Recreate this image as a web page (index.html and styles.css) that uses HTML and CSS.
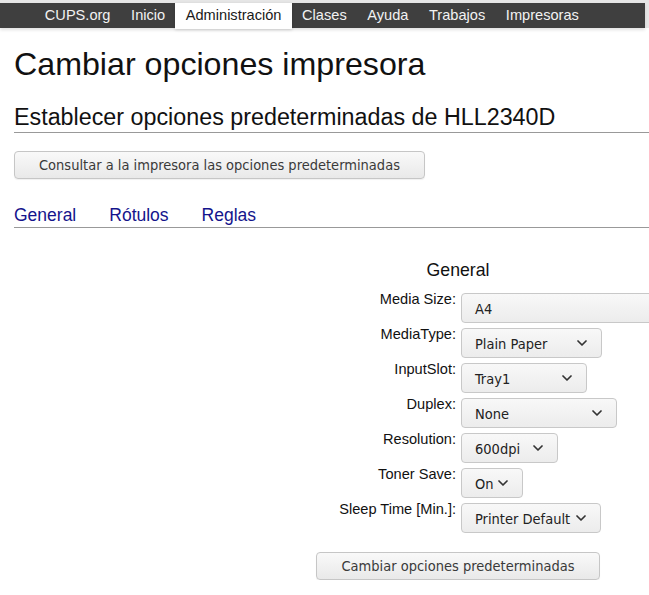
FILE: index.html
```html
<!DOCTYPE html>
<html lang="es">
<head>
<meta charset="utf-8">
<title>Cambiar opciones impresora</title>
<link rel="stylesheet" href="styles.css">
</head>
<body>
<nav class="topbar">
  <ul class="menu">
    <li><a href="#">CUPS.org</a></li>
    <li><a href="#">Inicio</a></li>
    <li class="active"><a href="#">Administración</a></li>
    <li><a href="#">Clases</a></li>
    <li><a href="#">Ayuda</a></li>
    <li><a href="#">Trabajos</a></li>
    <li><a href="#">Impresoras</a></li>
  </ul>
</nav>
<main class="page">
  <h1 class="title">Cambiar opciones impresora</h1>
  <h2 class="subtitle">Establecer opciones predeterminadas de HLL2340D</h2>
  <button class="btn">Consultar a la impresora las opciones predeterminadas</button>
  <div class="tabs">
    <a href="#">General</a>
    <a href="#">Rótulos</a>
    <a href="#">Reglas</a>
  </div>
  <section class="group">
    <h3 class="group-title">General</h3>
    <div class="opts">
      <label class="opt-label">Media Size:</label>
      <span class="sel sel-media"><span class="sel-text">A4</span></span>

      <label class="opt-label">MediaType:</label>
      <span class="sel sel-type"><span class="sel-text">Plain Paper</span><svg class="chev" viewBox="0 0 10 6"><path d="M1 1l4 4 4-4"/></svg></span>

      <label class="opt-label">InputSlot:</label>
      <span class="sel sel-slot"><span class="sel-text">Tray1</span><svg class="chev" viewBox="0 0 10 6"><path d="M1 1l4 4 4-4"/></svg></span>

      <label class="opt-label">Duplex:</label>
      <span class="sel sel-duplex"><span class="sel-text">None</span><svg class="chev" viewBox="0 0 10 6"><path d="M1 1l4 4 4-4"/></svg></span>

      <label class="opt-label">Resolution:</label>
      <span class="sel sel-res"><span class="sel-text">600dpi</span><svg class="chev" viewBox="0 0 10 6"><path d="M1 1l4 4 4-4"/></svg></span>

      <label class="opt-label">Toner Save:</label>
      <span class="sel sel-toner"><span class="sel-text">On</span><svg class="chev" viewBox="0 0 10 6"><path d="M1 1l4 4 4-4"/></svg></span>

      <label class="opt-label">Sleep Time [Min.]:</label>
      <span class="sel sel-sleep"><span class="sel-text">Printer Default</span><svg class="chev" viewBox="0 0 10 6"><path d="M1 1l4 4 4-4"/></svg></span>
    </div>
    <div class="submit-row">
      <button class="btn">Cambiar opciones predeterminadas</button>
    </div>
  </section>
</main>
</body>
</html>
```

FILE: styles.css
```css
html {
  overflow: hidden;
  background: #fff;
}
body {
  margin: 0;
  font-family: "Liberation Sans", Arial, sans-serif;
  color: #111;
  background: #fff;
}

/* top navigation */
.topbar {
  padding-top: 3px;
  background: #e6e6e6;
  padding-right: 4px;
}
.menu {
  list-style: none;
  margin: 0;
  padding: 0 0 0 34.5px;
  height: 25px;
  background: #3f3f3f;
  display: flex;
  box-shadow: 0 2px 3px rgba(0,0,0,0.12);
}
.menu li a {
  display: block;
  padding: 0 10.3px;
  font-size: 14.6px;
  line-height: 25px;
  color: #f2f2f2;
  text-decoration: none;
}
.menu li.active a {
  background: #fff;
  color: #1a1a1a;
  height: 26px;
  box-shadow: 0 1px 3px rgba(0,0,0,0.15);
}

.page {
  padding-left: 14px;
}

.title {
  margin: 17px 0 0;
  font-size: 32.2px;
  line-height: 1.2;
  font-weight: normal;
  color: #111;
}
.subtitle {
  margin: 20px 0 0;
  font-size: 23.3px;
  line-height: 1.2;
  font-weight: normal;
  color: #111;
  border-bottom: 1px solid #999;
  padding-bottom: 0;
}

.btn {
  display: inline-block;
  margin: 0;
  height: 28px;
  padding: 0 24px;
  font-family: "DejaVu Sans Condensed", "DejaVu Sans", sans-serif;
  font-stretch: condensed;
  font-size: 14.5px;
  color: #3a3a3a;
  background: linear-gradient(#f9f9f9, #e9e9e9);
  border: 1px solid #c6c6c6;
  border-radius: 4px;
  box-shadow: 0 1px 1px rgba(0,0,0,0.06);
}
.page > .btn {
  margin-top: 18px;
  display: block;
}

.tabs {
  margin-top: 26px;
  display: flex;
  gap: 33px;
  border-bottom: 1px solid #999;
  padding-bottom: 1px;
}
.tabs a {
  font-size: 17.5px;
  line-height: 1.2;
  color: #14148c;
  text-decoration: none;
}

.group {
  width: 888px;
}
.group-title {
  margin: 32px 0 0;
  text-align: center;
  font-size: 17.7px;
  line-height: 1.2;
  font-weight: normal;
  color: #111;
}
.opts {
  margin-top: 10px;
  display: grid;
  grid-template-columns: 442px 441px;
  column-gap: 5px;
  row-gap: 3px;
}
.opt-label {
  text-align: right;
  font-size: 14.6px;
  line-height: 1.2;
  color: #111;
}
.sel {
  margin-top: 2px;
  justify-self: start;
  box-sizing: border-box;
  height: 30px;
  display: flex;
  align-items: center;
  justify-content: space-between;
  padding: 0 14px 0 13px;
  font-family: "DejaVu Sans Condensed", "DejaVu Sans", sans-serif;
  font-stretch: condensed;
  font-size: 14.5px;
  color: #222;
  background: linear-gradient(#f8f8f8, #ececec);
  border: 1px solid #c8c8c8;
  border-radius: 4px;
}
.sel-text {
  padding-top: 2px;
}
.chev {
  width: 10px;
  height: 6px;
  flex: none;
  fill: none;
  stroke: #333;
  stroke-width: 1.7;
  stroke-linecap: round;
  stroke-linejoin: round;
}
.sel-media { width: 441px; }
.sel-type { width: 141px; }
.sel-slot { width: 126px; }
.sel-duplex { width: 156px; }
.sel-res { width: 97px; }
.sel-toner { width: 62px; }
.sel-sleep { width: 140px; }

.submit-row {
  margin-top: 19px;
  text-align: center;
}
```
